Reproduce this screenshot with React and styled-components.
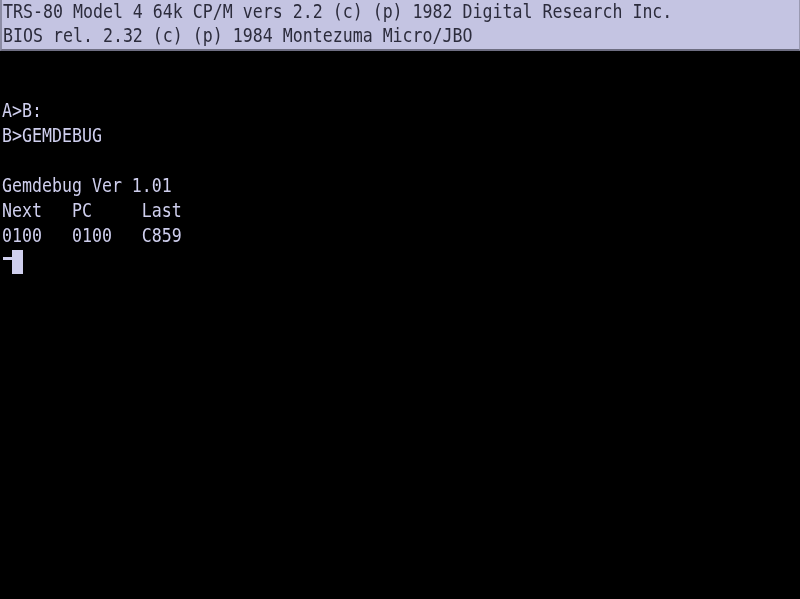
import React from 'react'
import styled, { createGlobalStyle } from 'styled-components'

const Global = createGlobalStyle`
    html, body {
        margin: 0;
        padding: 0;
        background: #000;
    }
`

const Screen = styled.div`
    width: 800px;
    height: 599px;
    background-color: #000;
    overflow: hidden;
    display: flex;
    flex-direction: column;
    font-family: "DejaVu Sans Mono", "Liberation Mono", monospace;
    font-size: 16.6px;
    filter: blur(0.35px);
`

const Banner = styled.div`
    display: flex;
    flex-direction: column;
    background-color: #c4c4e2;
    color: #2c2c3c;
    height: 49px;
    border-left: 2px solid #8c8ca4;
    border-bottom: 2px solid #6e6e82;
    border-right: 1px solid #9a9ab2;
`

const Row = styled.div`
    height: ${p => p.$h || 25}px;
    box-sizing: border-box;
    display: flex;
    align-items: ${p => p.$top ? 'flex-start' : 'center'};
    padding-left: ${p => p.$pad ?? 2}px;
    padding-bottom: ${p => p.$lift ?? 0}px;
    white-space: pre;
    color: ${p => p.$dark ? '#2c2c3c' : '#cfcfee'};
`

const Glyphs = styled.span`
    display: inline-block;
    transform: scaleY(1.2);
    line-height: 1;
`

const Prompt = styled.span`
    display: inline-block;
    width: 9px;
    height: 3px;
    margin-top: 6px;
    margin-left: 1px;
    background-color: #cfcfee;
`

const Cursor = styled.span`
    display: inline-block;
    width: 11px;
    height: 24px;
    margin-top: -1px;
    background-color: #cfcfee;
`

const lines = [
    '',
    '',
    'A>B:',
    'B>GEMDEBUG',
    '',
    'Gemdebug Ver 1.01',
    'Next   PC     Last',
    '0100   0100   C859',
]

function App() {
    return (
        <>
            <Global />
            <Screen>
                <Banner>
                    <Row $h={24} $pad={1} $dark>
                        <Glyphs>TRS-80 Model 4 64k CP/M vers 2.2 (c) (p) 1982 Digital Research Inc.</Glyphs>
                    </Row>
                    <Row $h={24} $pad={1} $dark>
                        <Glyphs>BIOS rel. 2.32 (c) (p) 1984 Montezuma Micro/JBO</Glyphs>
                    </Row>
                </Banner>
                {lines.map((line, i) => (
                    <Row key={i} $lift={4}>
                        <Glyphs>{line}</Glyphs>
                    </Row>
                ))}
                <Row $pad={2} $top>
                    <Prompt />
                    <Cursor />
                </Row>
            </Screen>
        </>
    )
}

export default App
